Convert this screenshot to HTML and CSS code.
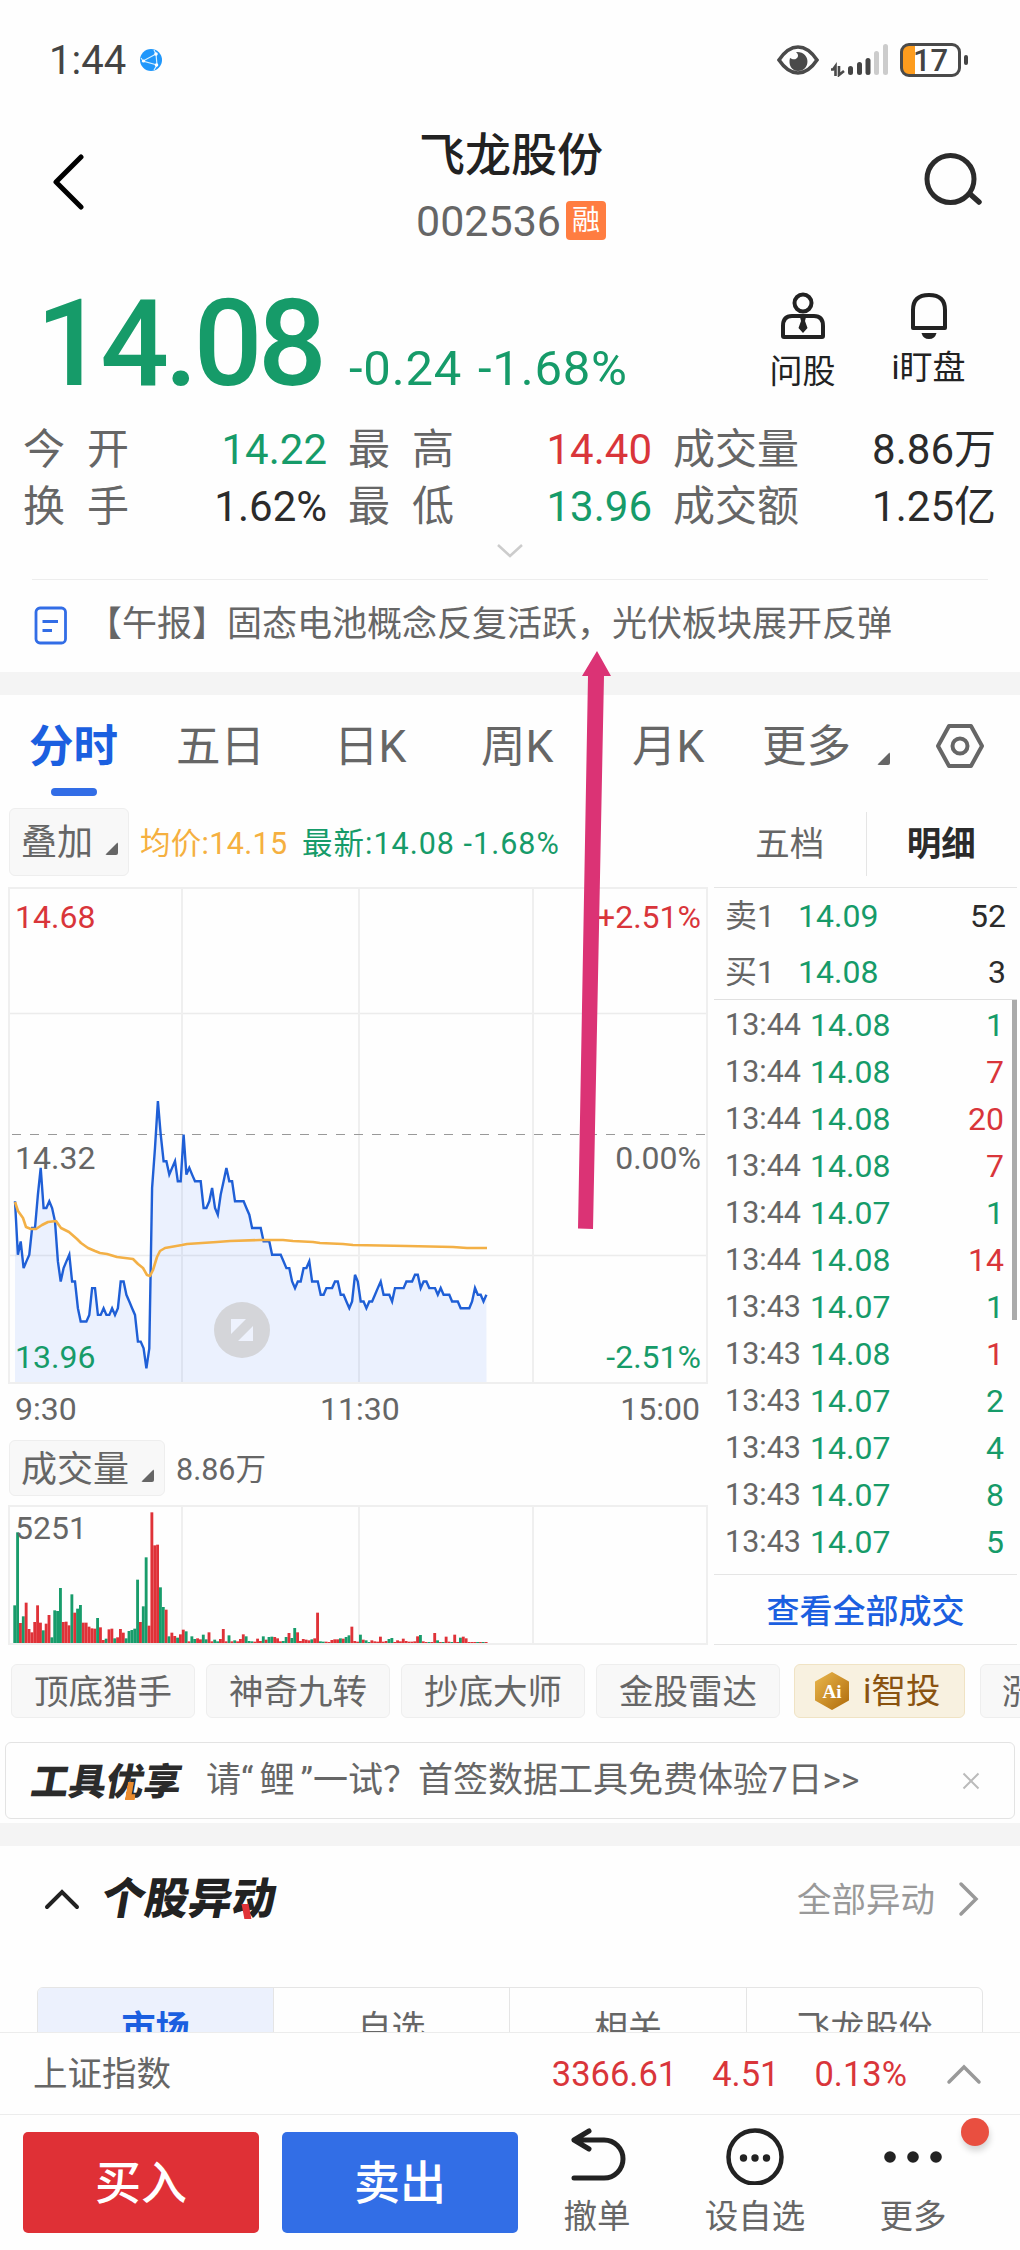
FILE: index.html
```html
<!DOCTYPE html>
<html lang="zh-CN">
<head>
  <meta charset="UTF-8">
  <title>飞龙股份 002536</title>
  <link rel="stylesheet" href="styles.css">
</head>
<body>
  <div class="page">
    <div class="status">
      <span class="clock">1:44</span>
      <svg class="globe" viewBox="0 0 22 22"><circle cx="11" cy="11" r="11" fill="#1f97fb"/><path d="M14 1L16 5L17 16L14 21M16 5L3 12L17 16M3 12L1 9" stroke="#d5f0ff" stroke-width="1.2" fill="none"/><circle cx="16" cy="5" r="1.8" fill="#fff"/><circle cx="3.5" cy="12" r="1.6" fill="#fff"/><circle cx="16.5" cy="16" r="1.8" fill="#fff"/></svg>
      <svg class="eye" viewBox="0 0 42 30"><path d="M2 15C8 6 14 2 21 2S34 6 40 15C34 24 28 28 21 28S8 24 2 15Z" fill="none" stroke="#4a4a4a" stroke-width="3.6"/><path d="M19 7C24 11 19 17 13 13C11 20 15 26 21 26C34 26 34 6 19 7Z" fill="#4a4a4a"/></svg>
      <svg class="signal" viewBox="0 0 58 34"><path d="M0 26.500H2L4.500 23V33M8 23V32L13 28" stroke="#4a4a4a" stroke-width="2.6" fill="none"/><rect x="17" y="23" width="5" height="9" rx="2.500" fill="#444"/><rect x="26" y="19" width="5" height="13" rx="2.500" fill="#444"/><rect x="34.500" y="15" width="5" height="17" rx="2.500" fill="#444"/><rect x="43" y="8" width="5" height="24" rx="2.500" fill="#ccc"/><rect x="52" y="1" width="5" height="31" rx="2.500" fill="#ccc"/></svg>
      <div class="battery"><span>17</span></div>
      <i class="battery-tip"></i>
    </div>

    <div class="header">
      <svg class="back" viewBox="0 0 32 56"><path d="M29 3L4 28L29 53" fill="none" stroke="#000" stroke-width="5" stroke-linecap="round" stroke-linejoin="round"/></svg>
      <div class="title">
        <h1>飞龙股份</h1>
        <div class="code">002536<span class="tag">融</span></div>
      </div>
      <svg class="search" viewBox="0 0 60 54"><circle cx="26.500" cy="26" r="23.500" fill="none" stroke="#2b2b2b" stroke-width="5"/><path d="M46 41L55 49" stroke="#2b2b2b" stroke-width="5.500" stroke-linecap="round"/></svg>
    </div>

    <div class="quote">
      <span class="price">14.08</span>
      <span class="change"><span>-0.24</span><span>-1.68%</span></span>
      <div class="tool ask">
        <svg viewBox="0 0 46 48"><circle cx="23" cy="11" r="8.500" fill="none" stroke="#222" stroke-width="4"/><path d="M3 44V34Q3 24 12 24H34Q43 24 43 34V44Q43 45 42 45H4Q3 45 3 44Z" fill="none" stroke="#222" stroke-width="4"/><path d="M20 25H26L25 29L27.500 36L23 41L18.500 36L21 29Z" fill="#222"/></svg>
        问股
      </div>
      <div class="tool watch">
        <svg viewBox="0 0 46 48"><path d="M7 36V18Q7 3 23 3T39 18V36Z" fill="none" stroke="#222" stroke-width="4" stroke-linejoin="round"/><path d="M15.500 41H30.500Q29 47 23 47T15.500 41Z" fill="#222"/></svg>
        i盯盘
      </div>
    </div>

    <div class="stats">
      <span>今<i></i>开</span><span class="val green">14.22</span>
      <span>最<i></i>高</span><span class="val red">14.40</span>
      <span>成交量</span><span class="val">8.86万</span>
      <span>换<i></i>手</span><span class="val">1.62%</span>
      <span>最<i></i>低</span><span class="val green">13.96</span>
      <span>成交额</span><span class="val">1.25亿</span>
    </div>
    <svg class="more-down" viewBox="0 0 28 16"><path d="M2 2L14 13L26 2" fill="none" stroke="#ccc" stroke-width="2.500"/></svg>

    <div class="news">
      <svg viewBox="0 0 34 40"><rect x="2" y="2" width="29.500" height="35" rx="4" fill="none" stroke="#326de6" stroke-width="2.800"/><path d="M8.500 15.500H24M8.500 24.500H18" stroke="#326de6" stroke-width="3"/></svg>
      <span>【午报】固态电池概念反复活跃，光伏板块展开反弹</span>
    </div>
    <div class="band"></div>

    <div class="tabs">
      <span class="on">分时</span>
      <span>五日</span>
      <span>日K</span>
      <span>周K</span>
      <span>月K</span>
      <span>更多<i class="corner"></i></span>
      <svg viewBox="0 0 50 46"><path d="M14 3H36L47 23L36 43H14L3 23Z" fill="none" stroke="#666" stroke-width="4" stroke-linejoin="round"/><circle cx="25" cy="23" r="7.500" fill="none" stroke="#666" stroke-width="4"/></svg>
    </div>

    <div class="main">
      <div class="left">
        <div class="legend">
          <span class="pick">叠加<i class="corner"></i></span>
          <span class="avg">均价:14.15</span>
          <span class="last">最新:14.08 -1.68%</span>
        </div>
        <div class="chart">
          <svg id="price" viewBox="0 0 700 497">
            <path d="M1 126.500H698M1 368.500H698" stroke="#ececec" stroke-width="1.500"/>
            <path d="M174 1V496M351 1V496M525 1V496" stroke="#efefef" stroke-width="2"/>
            <path d="M4 247.500H698" stroke="#999" stroke-width="1" stroke-dasharray="9 9"/>
            <rect x="1" y="1" width="698" height="495" fill="none" stroke="#efefef" stroke-width="2"/>
          </svg>
          <span class="lab high red">14.68</span><span class="lab high end red">+2.51%</span>
          <span class="lab mid">14.32</span><span class="lab mid end">0.00%</span>
          <span class="lab low green">13.96</span><span class="lab low end green">-2.51%</span>
          <svg class="expand" viewBox="0 0 56 56"><circle cx="28" cy="28" r="28" fill="#d4d5d9"/><path d="M17 17H32L17 32ZM39 24V39H24Z" fill="#eef2fd"/></svg>
        </div>
        <div class="times"><span>9:30</span><span>11:30</span><span>15:00</span></div>
        <div class="legend vol">
          <span class="pick">成交量<i class="corner"></i></span>
          <span>8.86万</span>
        </div>
        <div class="chart volume">
          <svg id="volume" viewBox="0 0 700 140">
            <path d="M174 1V139M351 1V139M525 1V139" stroke="#efefef" stroke-width="2"/>
            <rect x="1" y="1" width="698" height="138" fill="none" stroke="#efefef" stroke-width="2"/>
          </svg>
          <span class="lab max">5251</span>
        </div>
      </div>

      <div class="panel">
        <div class="switch"><span>五档</span><span class="on">明细</span></div>
        <div class="best">
          <div><span>卖1</span><span class="green">14.09</span><b>52</b></div>
          <div><span>买1</span><span class="green">14.08</span><b>3</b></div>
        </div>
        <div class="deals" id="deals"></div>
        <div class="all">查看全部成交</div>
      </div>
    </div>

    <div class="chips">
      <span>顶底猎手</span>
      <span>神奇九转</span>
      <span>抄底大师</span>
      <span>金股雷达</span>
      <span class="ai"><svg viewBox="0 0 36 38"><defs><linearGradient id="gold" x1="0" y1="0" x2="1" y2="1"><stop offset="0" stop-color="#e9b64c"/><stop offset="1" stop-color="#b06c0c"/></linearGradient></defs><path d="M18 1L34 10V28L18 37L2 28V10Z" fill="url(#gold)" stroke="url(#gold)" stroke-width="2" stroke-linejoin="round"/><text x="18" y="25.500" text-anchor="middle">Ai</text></svg>i智投</span>
      <span class="next">涨</span>
    </div>

    <div class="banner">
      <b>工具优享<i></i></b>
      <span>请“<i></i>鲤<i></i>”一试？首签数据工具免费体验7日&gt;&gt;</span>
      <svg viewBox="0 0 18 18"><path d="M1.500 1.500L16.500 16.500M16.500 1.500L1.500 16.500" stroke="#bbb" stroke-width="2"/></svg>
    </div>
    <div class="band"></div>

    <div class="section">
      <svg class="fold" viewBox="0 0 36 22"><path d="M3 19L18 4L33 19" fill="none" stroke="#222" stroke-width="4" stroke-linecap="round"/></svg>
      <b>个股异动<i></i></b>
      <span>全部异动</span>
      <svg class="go" viewBox="0 0 22 36"><path d="M3 3L18 18L3 33" fill="none" stroke="#999" stroke-width="3.500" stroke-linecap="round"/></svg>
    </div>
    <div class="cells">
      <span class="on">市场</span><span>自选</span><span>相关</span><span>飞龙股份</span>
    </div>

    <svg class="arrow" viewBox="0 0 34 582"><path d="M20 1L34 26H27L16 579L1 578.500L11 26H5Z" fill="#db3375"/></svg>
  </div>

  <div class="index">
    <span class="label">上证指数</span>
    <span>3366.61</span><span>4.51</span><span>0.13%</span>
    <svg viewBox="0 0 36 22"><path d="M3 19L18 4L33 19" fill="none" stroke="#999" stroke-width="3.500" stroke-linecap="round"/></svg>
  </div>
  <div class="actions">
    <button class="buy">买入</button>
    <button class="sell">卖出</button>
    <div class="act cancel">
      <svg viewBox="0 0 60 60"><path d="M22 6L7 15L22 24M7 15H37A19 19 0 0 1 37 53H7" fill="none" stroke="#222" stroke-width="5" stroke-linecap="round" stroke-linejoin="round"/></svg>
      撤单
    </div>
    <div class="act pickup">
      <svg viewBox="0 0 60 60"><circle cx="30" cy="32" r="26.500" fill="none" stroke="#222" stroke-width="4.500"/><g fill="#222"><circle cx="18.500" cy="33" r="3.700"/><circle cx="30" cy="33" r="3.700"/><circle cx="41.500" cy="33" r="3.700"/></g></svg>
      设自选
    </div>
    <div class="act others">
      <svg viewBox="0 0 60 60"><g fill="#222"><circle cx="7" cy="32" r="5.800"/><circle cx="30" cy="32" r="5.800"/><circle cx="53" cy="32" r="5.800"/></g></svg>
      更多
      <i class="dot"></i>
    </div>
  </div>
  <script src="chart.js"></script>
</body>
</html>
```
FILE: styles.css
```css
body {
  margin: 0;
  width: 1020px;
  height: 2250px;
  overflow: hidden;
  background: #fefefe;
  color: #666;
  font-family: Roboto, "Noto Sans CJK SC", sans-serif;
  font-size: 34px;
  line-height: 1.2;
}
.page {
  position: relative;
  height: 2032px;
  overflow: hidden;
}
.red { color: #d9353a; }
.green { color: #169b69; }
svg { display: block; flex: none; }
.corner {
  display: inline-block;
  width: 13px;
  height: 13px;
  background: #666;
  border-radius: 2px;
  clip-path: polygon(100% 0, 100% 100%, 0 100%);
}
.band { height: 23px; background: #f4f4f4; }

/* status bar */
.status {
  display: flex;
  align-items: center;
  height: 120px;
  padding: 0 52px 0 49px;
  color: #444;
}
.clock { font-size: 40px; width: 91px; padding-top: 2px; }
.globe { width: 22px; height: 22px; margin-right: auto; }
.eye { width: 42px; height: 30px; }
.signal { width: 58px; height: 34px; margin: 0 11px 0 12px; }
.battery {
  box-sizing: border-box;
  width: 61px;
  height: 34px;
  border: 3px solid #4a4a4a;
  border-radius: 9px;
  background: linear-gradient(90deg, #fd9c1e 12px, #fff 12px);
  font-size: 31px;
  font-weight: 500;
  line-height: 29px;
  text-align: center;
}
.battery-tip { width: 4px; height: 10px; margin-left: 3px; background: #444; border-radius: 2px; }

/* header */
.header {
  display: flex;
  align-items: flex-start;
  justify-content: space-between;
  height: 130px;
  padding: 0 36px 0 52px;
}
.back { width: 32px; height: 56px; margin-top: 34px; }
.search { width: 60px; height: 54px; margin-top: 33px; }
.title { padding-left: 14px; }
h1 { margin: 8px 0 0; font-size: 46px; line-height: 54px; font-weight: 500; color: #222; text-align: center; }
.code { display: flex; align-items: center; margin-top: 19px; height: 40px; font-size: 43px; line-height: 46px; }
.tag {
  width: 40px;
  height: 39px;
  margin-left: 5px;
  margin-top: -2px;
  border-radius: 4px;
  background: #ff7d41;
  color: #fff;
  font-size: 28px;
  line-height: 40px;
  text-align: center;
}

/* quote */
.quote { display: flex; height: 170px; padding-left: 36px; color: #169b69; }
.price { width: 313px; margin-top: 22px; font-size: 121px; font-weight: 500; letter-spacing: -4.5px; line-height: 145px; }
.change { display: flex; width: 420px; margin-top: 85px; font-size: 49px; line-height: 68px; }
.change span { width: 129px; white-space: nowrap; letter-spacing: .8px; }
.tool { display: flex; flex-direction: column; align-items: center; width: 67px; padding-top: 42px; font-size: 33px; color: #222; white-space: nowrap; line-height: 50px; }
.tool svg { width: 46px; height: 48px; margin-bottom: 7px; }
.watch { margin-left: 59px; }
.watch svg { margin-bottom: 3px; }

.stats {
  display: grid;
  grid-template-columns: 140px 164px 160px 165px 160px 184px;
  grid-auto-rows: 57px;
  padding-left: 23px;
  font-size: 42px;
  line-height: 60px;
  white-space: nowrap;
}
.stats i { display: inline-block; width: 22px; }
.stats span:nth-child(6n+3), .stats span:nth-child(6n+5) { padding-left: 21px; }
.val { text-align: right; }
.val:not(.red):not(.green) { color: #2b2b2b; }
.more-down { width: 28px; height: 16px; margin: 9px auto 20px; }

.news {
  display: flex;
  align-items: center;
  height: 92px;
  margin: 0 32px;
  border-top: 1px solid #ededed;
  font-size: 35px;
  white-space: nowrap;
}
.news svg { width: 34px; height: 40px; margin: 0 19px 0 2px; }
.news span { margin-top: -2px; }

/* period tabs */
.tabs { display: grid; grid-template-columns: 147px 158px 147px 151px 130px 173px auto; height: 105px; padding-left: 29px; font-size: 44.5px; line-height: 104px; }
.tabs span { position: relative; white-space: nowrap; }
.tabs .on { font-weight: 700; color: #1b5fe0; }
.tabs .on::after { content: ""; position: absolute; left: 22px; bottom: 4px; width: 46px; height: 8px; border-radius: 4px; background: #326de6; }
.tabs .corner { margin-left: 26px; position: relative; top: 3px; }
.tabs svg { width: 50px; height: 46px; margin-top: 28px; }

/* charts */
.main { display: flex; height: 846px; }
.left { width: 714px; }
.legend { display: flex; align-items: center; height: 68px; padding: 8px 0 11px 9px; font-size: 30.5px; line-height: 38px; }
.legend > span + span { padding-top: 4px; }
.pick {
  box-sizing: border-box;
  height: 68px;
  padding: 0 10px 0 11px;
  margin-right: 11px;
  border: 1px solid #eee;
  border-radius: 6px;
  background: #f8f8f8;
  font-size: 36px;
  line-height: 69px;
}
.pick .corner { margin-left: 12px; }
.avg { width: 162px; color: #f5b040; letter-spacing: .3px; }
.last { color: #169b69; letter-spacing: 1px; }
.chart { position: relative; width: 700px; height: 497px; margin-left: 8px; }
.chart > svg:first-child { width: 100%; height: 100%; }
.lab { position: absolute; left: 7px; font-size: 32px; line-height: 32px; }
.lab.end { left: auto; right: 7px; }
.high { top: 14px; }
.mid { top: 255px; }
.low { top: 454px; }
.max { top: 7px; }
.chart .expand { position: absolute; left: 206px; top: 415px; width: 56px; height: 56px; }
.times { display: grid; grid-template-columns: 305px auto auto; height: 56px; padding: 0 14px 0 15px; font-size: 32px; line-height: 51px; }
.times span:last-child { text-align: right; }
.vol { height: 56px; padding: 0 0 9px 9px; }
.vol .pick { height: 56px; line-height: 59px; }
.volume { height: 140px; }

/* order panel */
.panel { width: 303px; }
.switch { display: flex; height: 87px; border-bottom: 1px solid #e5e5e5; font-size: 34.5px; line-height: 89px; text-align: center; }
.switch span { flex: 1; }
.switch .on { font-weight: 700; color: #2b2b2b; background: linear-gradient(#e5e5e5, #e5e5e5) 0 12px / 1px 64px no-repeat; }
.best { height: 111px; border-bottom: 1px solid #e0e0e0; }
.best div { display: flex; height: 56px; padding: 0 11px; line-height: 57px; font-size: 32px; }
.best span:first-child { width: 73px; }
.best b { margin-left: auto; font-weight: 400; color: #2b2b2b; }
.deals { box-sizing: border-box; height: 574px; border-right: 5px solid transparent; background: linear-gradient(#aaa, #aaa) 100% 0 / 5px 320px no-repeat border-box; }
.deals div { display: flex; height: 47px; padding: 0 8px 0 11px; font-size: 32px; line-height: 50px; }
.deals time { width: 85px; font-size: 30.5px; }
.deals b { margin-left: auto; font-weight: 400; }
.all { height: 69px; border: solid #e5e5e5; border-width: 1px 0; font-size: 33px; font-weight: 500; line-height: 73px; text-align: center; color: #1b5fe0; }

/* tool chips */
.chips { display: flex; margin-top: 18px; padding-left: 11px; height: 54px; overflow: hidden; }
.chips span {
  box-sizing: border-box;
  flex: none;
  width: 184px;
  margin-right: 11px;
  border: 1px solid #eee;
  border-radius: 6px;
  background: #f8f8f8;
  font-size: 34.5px;
  line-height: 54px;
  text-align: center;
}
.chips .ai { display: flex; align-items: center; gap: 13px; width: 171px; padding-left: 19px; margin: 0 15px 0 3px; color: #8a5310; background: #f8f1e0; border-color: #f0e3c4; }
.chips .next { padding-left: 21px; text-align: left; }
.ai svg { width: 36px; height: 38px; }
.ai text { font: 700 19px "Liberation Serif", serif; fill: #fff; }

.banner {
  box-sizing: border-box;
  display: flex;
  align-items: center;
  height: 77px;
  margin: 24px 5px 4px;
  padding: 0 34px 0 26px;
  border: 1px solid #e3e3e3;
  border-radius: 6px;
  font-size: 35px;
  white-space: nowrap;
}
.banner span i { display: inline-block; width: 6px; }
.banner b, .section b { position: relative; font-weight: 900; color: #2b2b2b; transform: skewX(-10deg); }
.banner b { width: 174px; font-size: 37.5px; padding-top: 3px; }
.banner b i, .section b i { position: absolute; background: #e98c30; }
.banner b i { left: 96px; bottom: 5px; width: 6px; height: 18px; border-right: 4px solid #e98c30; clip-path: polygon(0 0, 60% 0, 60% 70%, 100% 70%, 100% 100%, 0 100%); }
.banner svg { width: 18px; height: 18px; margin-left: auto; }

.section { display: flex; align-items: center; height: 106px; padding: 0 40px 0 44px; }
.section b { margin: 2px auto 0 22px; font-size: 43.5px; color: #222; }
.section b i { right: 24px; bottom: 7px; width: 7px; height: 15px; background: #e03338; transform: skewX(20deg); }
.section span { color: #999; margin: 3px 23px 0 0; font-size: 34.5px; }
.fold { width: 36px; height: 22px; }
.go { width: 22px; height: 36px; }

.cells { display: grid; grid-template-columns: 235px 236px 237px auto; margin: 35px 37px 0; border: 1px solid #e5e5e5; border-radius: 6px 6px 0 0; overflow: hidden; }
.cells span { height: 80px; line-height: 80px; text-align: center; border-left: 1px solid #e5e5e5; }
.cells .on { background: #ecf1fd; color: #1b5fe0; font-weight: 700; border-left: 0; }

.arrow { position: absolute; left: 577px; top: 650px; width: 34px; height: 582px; }

/* bottom bars */
.index { box-sizing: border-box; display: flex; align-items: center; height: 82px; padding: 3px 38px 0 33px; border-top: 1px solid #ececec; font-size: 34.5px; color: #d9353a; }
.index .label { margin-right: auto; color: #666; }
.index span + span { margin-right: 35px; }
.index svg { width: 36px; height: 22px; margin: -3px 0 0 4px; }
.actions { display: flex; height: 136px; border-top: 1px solid #ececec; }
button { width: 236px; height: 101px; margin: 17px 0 0 23px; padding: 0; border: 0; border-radius: 5px; color: #fff; font: 500 46px/103px Roboto, "Noto Sans CJK SC", sans-serif; }
.buy { background: #df3036; }
.sell { background: #326ee6; }
.act { position: relative; display: flex; flex-direction: column; align-items: center; width: 120px; padding-top: 10px; font-size: 33.5px; line-height: 57px; white-space: nowrap; }
.act svg { width: 60px; height: 60px; margin-bottom: 3px; }
.cancel { margin-left: 19px; }
.pickup { margin-left: 38px; }
.others { margin-left: 38px; }
.dot { position: absolute; right: -16px; top: 3px; width: 28px; height: 28px; border-radius: 50%; background: #e94f40; box-shadow: 1px 5px 6px rgba(0,0,0,0.16); }
```
FILE: chart.js
```js
const NS = "http://www.w3.org/2000/svg";
const STEP = 2.857;

// cents below the previous close, one value per minute
const cents = [
  10,18,16,20,19,18,14,14,9,5,11,11,10,11,13,19,22,20,19,18,22,22,26,28,28,28,27,23,23,27,
  27,26,27,27,26,27,26,22,22,24,25,26,27,31,31,32,35,32,8,2,-5,0,4,4,6,5,4,7,7,0,
  6,5,6,7,7,7,11,11,10,8,11,12,9,7,5,7,7,10,10,10,10,11,12,14,14,14,14,16,16,16,
  18,18,18,18,19,20,20,22,23,22,22,20,20,19,22,22,22,24,24,23,23,23,22,22,24,24,25,26,25,21,
  22,25,25,26,25,25,24,23,22,24,24,24,25,23,23,23,23,22,22,22,21,21,23,22,22,23,23,23,24,23,
  24,24,24,25,25,25,26,26,26,26,25,23,24,24,25,24
];

const average = "7,315 10,324 15,331 18,340 23,342 28,342 34,338 40,335 48,334 53,341 61,345 69,352 73,356 80,361 87,364 92,366 99,367 109,370 125,372 130,377 135,381 139,388 142,389 145,383 149,370 152,364 157,361 174,358 179,357 209,355 222,354 252,353 275,353 285,354 305,355 312,356 335,357 345,358 399,359 445,360 459,361 479,361";

const volumes = ("g113 g332 r60 g80 r121 r42 r32 r63 r113 r61 g38 r58 r84 g17 g98 g96 g165 r63 r64 r53 " +
  "g146 r91 g103 g114 r61 r61 r49 r44 r43 g75 r47 r9 g13 r41 r43 g14 r17 r42 r31 g14 " +
  "g36 g39 g43 g190 r63 g110 g257 r52 r392 r293 r295 g167 g108 r100 g20 r31 r21 g16 r26 r40 " +
  "g35 r5 g20 g12 r14 r11 g25 g11 r32 r5 g10 g5 r12 r42 r5 g23 r5 g8 r5 r12 " +
  "r26 g20 g6 g5 r4 r13 r6 g20 r10 g18 g19 r18 r14 r5 g6 g18 r30 g15 g45 r32 " +
  "r6 r12 r10 r8 g11 r14 r91 g5 g4 r4 r3 r9 r11 r11 g14 r13 g18 g23 r49 r6 " +
  "r4 g25 r10 g8 g3 r8 r5 r4 r19 r4 r6 g12 g15 r3 r8 r5 r13 r6 r4 r4 " +
  "r5 r20 g24 r5 r3 g3 r3 r30 g8 r3 g3 r19 r4 g3 r25 r3 g16 r19 r14 r3 " +
  "r3 r3 g3 r3 g3 r3").split(" ");

const deals = [
  ["13:44", "14.08", 1, "green"], ["13:44", "14.08", 7, "red"], ["13:44", "14.08", 20, "red"],
  ["13:44", "14.08", 7, "red"], ["13:44", "14.07", 1, "green"], ["13:44", "14.08", 14, "red"],
  ["13:43", "14.07", 1, "green"], ["13:43", "14.08", 1, "red"], ["13:43", "14.07", 2, "green"],
  ["13:43", "14.07", 4, "green"], ["13:43", "14.07", 8, "green"], ["13:43", "14.07", 5, "green"]
];

function add(parent, tag, attrs) {
  const el = document.createElementNS(NS, tag);
  for (const k in attrs) el.setAttribute(k, attrs[k]);
  parent.appendChild(el);
}

const price = document.getElementById("price");
const line = cents.map((c, i) => `${(7 + i * STEP).toFixed(1)},${(247.5 + c * 6.68).toFixed(1)}`).join(" ");
add(price, "polygon", { points: `7,495 ${line} 478.5,495`, fill: "#2b6bff", "fill-opacity": 0.09 });
add(price, "polyline", { points: line, fill: "none", stroke: "#1f5fd6", "stroke-width": 2.4 });
add(price, "polyline", { points: average, fill: "none", stroke: "#f3b046", "stroke-width": 2.6, "stroke-linejoin": "round" });

const volume = document.getElementById("volume");
volumes.forEach((v, i) => {
  const h = v.slice(1) / 3;
  add(volume, "rect", { x: 5.3 + i * STEP, y: 138 - h, width: 2.86, height: h, fill: v[0] === "r" ? "#df3238" : "#189c6b" });
});

document.getElementById("deals").innerHTML = deals.map(d =>
  `<div><time>${d[0]}</time><span class="green">${d[1]}</span><b class="${d[3]}">${d[2]}</b></div>`).join("");
```
